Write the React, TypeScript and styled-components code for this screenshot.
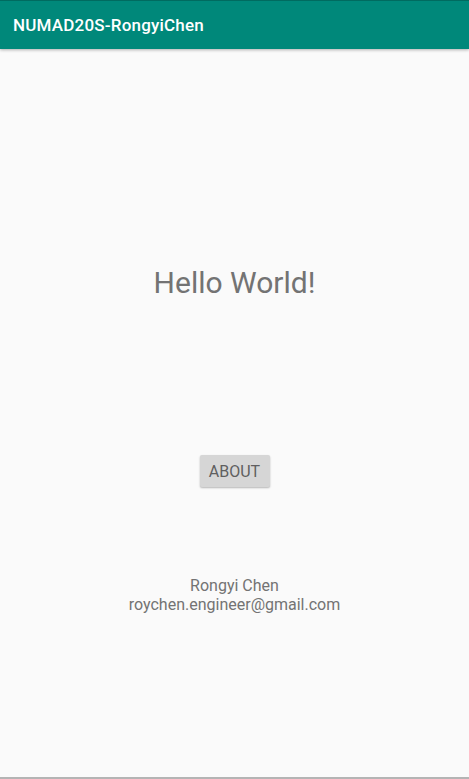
import React from "react";
import styled, { createGlobalStyle } from "styled-components";

const Global = createGlobalStyle`
  html, body { margin: 0; padding: 0; background: #fafafa; }
  body { font-family: Roboto, "Noto Sans", sans-serif; }
`;

const Screen = styled.div`
  width: 469px;
  height: 779px;
  box-sizing: border-box;
  display: flex;
  flex-direction: column;
  background: #fafafa;
  border-bottom: 2px solid #b4b4b4;
  overflow: hidden;
`;

const Toolbar = styled.header`
  height: 48px;
  flex: none;
  display: flex;
  align-items: center;
  padding-left: 13px;
  background: #00887a;
  border-top: 1px solid #006b60;
  box-shadow: 0 1px 3px rgba(0, 0, 0, 0.3);
  position: relative;
  z-index: 1;
`;

const Title = styled.h1`
  margin: 0;
  color: #ffffff;
  font-size: 17px;
  font-weight: 500;
  letter-spacing: 0.2px;
`;

const Content = styled.main`
  flex: 1;
  display: flex;
  flex-direction: column;
  align-items: center;
`;

const Greeting = styled.p`
  margin: 217px 0 0;
  font-size: 30px;
  line-height: 34px;
  color: #737373;
`;

const AboutButton = styled.button`
  margin-top: 155px;
  width: 70px;
  height: 32px;
  border: none;
  border-radius: 2px;
  background: #d6d6d6;
  box-shadow: 0 1px 2px rgba(0, 0, 0, 0.28);
  color: #5f5f5f;
  font-family: Roboto, sans-serif;
  font-size: 16px;
  font-weight: 400;
  padding: 0;
`;

const Credits = styled.div`
  margin-top: 89px;
  display: flex;
  flex-direction: column;
  align-items: center;
  font-size: 16px;
  line-height: 19px;
  color: #737373;
`;

export default function App() {
  return (
    <>
      <Global />
      <Screen>
        <Toolbar>
          <Title>NUMAD20S-RongyiChen</Title>
        </Toolbar>
        <Content>
          <Greeting>Hello World!</Greeting>
          <AboutButton>ABOUT</AboutButton>
          <Credits>
            <span>Rongyi Chen</span>
            <span>roychen.engineer@gmail.com</span>
          </Credits>
        </Content>
      </Screen>
    </>
  );
}
